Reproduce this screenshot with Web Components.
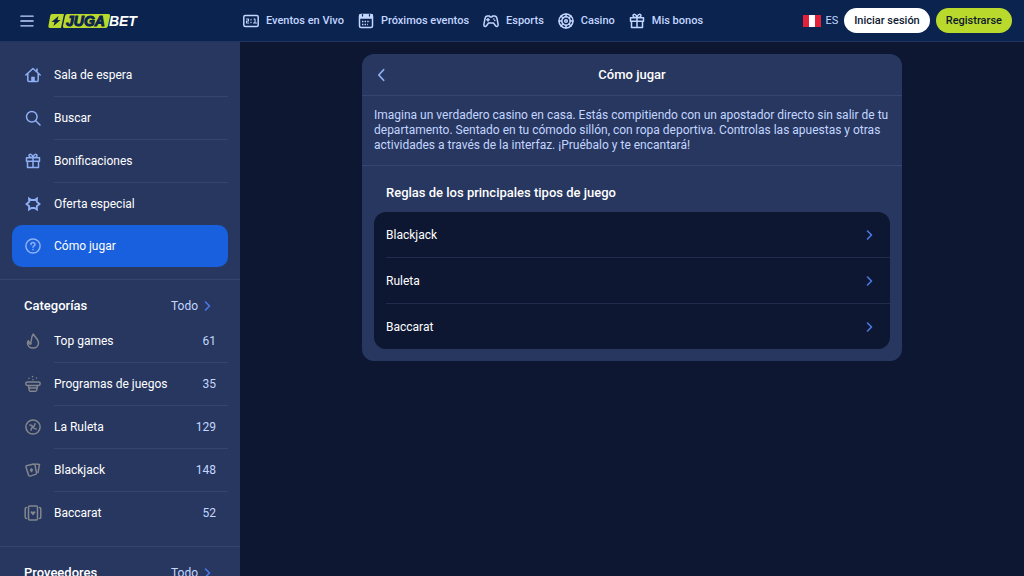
<!DOCTYPE html>
<html lang="es">
<head>
<meta charset="utf-8">
<meta name="viewport" content="width=device-width, initial-scale=1">
<title>Cómo jugar</title>
<style>
  :root {
    --bg: #0d1731;
    --surface: #27375f;
    --line: #344570;
    --header: #0b234f;
    --accent: #1860dd;
    --lime: #b9da2c;
    --soft: #c3d6ff;
    --icon: #8fb0f5;
    --sidebar: 240px;
  }
  body { margin: 0; background: var(--bg); color: #fff; font: 12px/16px Roboto, "Liberation Sans", sans-serif; }
</style>
</head>
<body>
<jb-app>
  <jb-header slot="header">
    <jb-nav-link icon="score">Eventos en Vivo</jb-nav-link>
    <jb-nav-link icon="calendar">Próximos eventos</jb-nav-link>
    <jb-nav-link icon="gamepad">Esports</jb-nav-link>
    <jb-nav-link icon="chip">Casino</jb-nav-link>
    <jb-nav-link icon="gift">Mis bonos</jb-nav-link>
  </jb-header>
  <jb-sidebar slot="sidebar">
    <jb-group>
      <jb-side-item icon="home">Sala de espera</jb-side-item>
      <jb-side-item icon="search">Buscar</jb-side-item>
      <jb-side-item icon="gift">Bonificaciones</jb-side-item>
      <jb-side-item icon="star" last>Oferta especial</jb-side-item>
      <jb-side-item icon="help" last active>Cómo jugar</jb-side-item>
    </jb-group>
    <jb-group heading="Categorías">
      <jb-side-item icon="fire" muted count="61">Top games</jb-side-item>
      <jb-side-item icon="hat" muted count="35">Programas de juegos</jb-side-item>
      <jb-side-item icon="wheel" muted count="129">La Ruleta</jb-side-item>
      <jb-side-item icon="cards" muted count="148">Blackjack</jb-side-item>
      <jb-side-item icon="baccarat" muted count="52" last>Baccarat</jb-side-item>
    </jb-group>
    <jb-group heading="Proveedores"></jb-group>
  </jb-sidebar>
  <jb-panel heading="Cómo jugar">
    <span slot="intro">Imagina un verdadero casino en casa. Estás compitiendo con un apostador directo sin salir de tu departamento. Sentado en tu cómodo sillón, con ropa deportiva. Controlas las apuestas y otras actividades a través de la interfaz. ¡Pruébalo y te encantará!</span>
    <span slot="subtitle">Reglas de los principales tipos de juego</span>
    <jb-rule-row>Blackjack</jb-rule-row>
    <jb-rule-row>Ruleta</jb-rule-row>
    <jb-rule-row last>Baccarat</jb-rule-row>
  </jb-panel>
</jb-app>

<script>
const ICONS = {
  menu: '<path d="M1 2.500h14M1 8h14M1 13.500h14"/>',
  score: '<rect x=".8" y="2.5" width="14.4" height="11" rx="1.5"/><path d="M3.5 6h2v2h-2v2h2.2M11 6h1v4M10.5 10h3M8 6.2v.8M8 9v.8" stroke-width="1.1"/>',
  calendar: '<rect x="1.5" y="1.5" width="13" height="13" rx="1.500"/><path d="M2 2h12v3H2z" fill="currentColor"/><path d="M4.500 1.500v1.500M11.500 1.500v1.500" stroke="#0b234f" stroke-width="1.200"/><path d="M4 8.500h8M4 11.500h6" stroke-dasharray="1.4 1.2" stroke-linecap="butt"/>',
  gamepad: '<path d="M4.500 3h2l.7 1h1.600l.7-1h2c1.500 0 2.200 1 2.600 2.800l1 5.700c.3 1.900-1.500 2.600-2.600 1.300L10.500 10h-5l-2 2.800C2.400 14.100.6 13.400.9 11.500l1-5.700C2.300 4 3 3 4.500 3z"/><path d="M5 5.500v2.400M3.800 6.700h2.400M10.800 6h.1M11.800 7.500h.1"/>',
  chip: '<circle cx="8" cy="8" r="7"/><circle cx="8" cy="8" r="4.200"/><circle cx="8" cy="8" r="1.300"/><path d="M8 1v2.800M8 12.200V15M1 8h2.800M12.200 8H15M3 3l2 2M11 11l2 2M13 3l-2 2M5 11l-2 2"/>',
  gift: '<path d="M1.500 4.800h13v3.400h-13zM2.500 8.200h11v6.300h-11zM8 4.800v9.700M8 4.800C5 4.800 4 3.700 4 2.600 4 .8 7.300.4 8 4.800zM8 4.800c3 0 4-1.100 4-2.200C12 .8 8.700.4 8 4.800z"/>',
  home: '<path d="M.8 8 8 1.500 15.200 8M12 4.500V2M2.800 6.500v6.700c0 .8.400 1.300 1.300 1.300h7.800c.9 0 1.300-.5 1.300-1.300V6.500"/><path d="M6.500 14.500V10h3v4.500" fill="currentColor" stroke-width=".6"/>',
  search: '<circle cx="6.800" cy="6.800" r="5.300"/><path d="m10.700 10.700 4.300 4.300"/>',
  star: '<path d="M4 2.500 6.500 4h3L12 2.500l-.2 3.300L14.500 8l-2.700 2.200.2 3.300L9.500 12h-3L4 13.500l.2-3.300L1.500 8l2.700-2.200z" stroke-width="1.800" stroke-linejoin="miter"/>',
  help: '<circle cx="8" cy="8" r="7.100"/><path d="M6 6.500C6 4 10 4 10 6.400 10 8 8 7.800 8 9.200M8 11.400v.3"/>',
  fire: '<path d="M8.300 1C9 3.500 13.500 6 13.500 10c0 3-2.300 5-5.500 5s-5.500-2-5.500-4.700c0-1 .3-1.900.8-2.600.3 1.300 1 2 1.900 2C7.400 9.700 5 5 8.300 1z"/><path d="M3 9.500c.6 1.500 2 2 3.200 1.200"/>',
  hat: '<rect x=".8" y="6" width="14.400" height="3.400" rx="1.700"/><path d="M3.500 9.500 4.200 14q.2 1.200 1.300 1.200h5q1.100 0 1.300-1.200l.7-4.500M4 12h8M7.500 .6v.1M4 2.200v.1M11.500 2v.1M8 3.700v.1"/>',
  wheel: '<circle cx="8" cy="8" r="7.100"/><path d="M4.800 6C6.500 6 7.500 7 8 8c.5 1 1.500 2 3.200 2M10 4.800C10 6.500 9 7.500 8 8c-1 .5-2 1.500-2 3.200"/>',
  cards: '<path d="m1.500 3.700 7.200-1.700q1-.1 1.300.9l1.500 8.200q.1 1-.9 1.300l-5.600 1.700q-1 .1-1.400-.9L1 5q-.2-1 .5-1.300zM11 2l3.500.5L13 10.500"/><path d="m6.200 5.700 2.100 2.100-1.500 2.700-2.200-2z" fill="currentColor" stroke="none"/>',
  baccarat: '<rect x="3.500" y="1" width="9" height="14" rx="1.200"/><path d="M1.500 2.500C.5 2.500.2 3 .2 4v8c0 1 .3 1.500 1.300 1.500M14.500 2.500c1 0 1.300.5 1.300 1.500v8c0 1-.3 1.500-1.300 1.500"/><path d="M8 10.500 5.500 7.500c0-1.700 2-1.700 2.500-.5.500-1.200 2.500-1.200 2.500.5z" fill="currentColor" stroke="none"/>',
  right: '<path d="m5.500 4 4 4-4 4" stroke-width="1.600"/>',
  left: '<path d="M11 2 5.500 8l5.500 6" stroke-width="2"/>'
};

function define(name, render) {
  customElements.define(name, class extends HTMLElement {
    constructor() {
      super();
      this.attachShadow({ mode: 'open' });
    }
    connectedCallback() {
      this.shadowRoot.innerHTML = render(this);
    }
  });
}

define('jb-icon', el => `
  <style>
    :host { display: block; flex: none; width: 16px; height: 16px; }
    svg { display: block; width: 100%; height: 100%; overflow: visible; fill: none; stroke: currentColor;
      stroke-width: 1.5; stroke-linecap: round; stroke-linejoin: round; }
  </style>
  <svg viewBox="0 0 16 16" aria-hidden="true">${ICONS[el.getAttribute('name')]}</svg>`);

define('jb-logo', () => `
  <style>
    :host { display: block; flex: none; }
    a { display: flex; align-items: center; height: 14px; text-decoration: none;
      font: italic 700 14px/14px "Liberation Sans", Arial, sans-serif; color: var(--header); }
    svg { display: block; width: 16px; height: 14px; }
    .juga { position: relative; z-index: 0; padding: 0 4px 0 2px; -webkit-text-stroke: 1px var(--header); }
    .juga::before { content: ""; position: absolute; z-index: -1; inset: 0; background: var(--lime); border-radius: 2px; transform: skewX(-12deg); }
    .bet { color: #fff; }
  </style>
  <a href="#" aria-label="Jugabet">
    <svg viewBox="0 0 16 14"><path d="M4 0h12l-3 14H2Q0 14 .4 12L2.200 2Q2.500 0 4 0z" fill="#b9da2c"/><path d="M10.500 2 3.500 8h3L5.500 12l7-6h-3z" fill="#0b234f"/></svg>
    <span class="juga">JUGA</span><span class="bet">BET</span>
  </a>`);

define('jb-header', () => `
  <style>
    :host { display: flex; align-items: center; gap: 3px; box-sizing: border-box; height: 42px; padding-right: 12px;
      background: var(--header); border-bottom: 1px solid #203660; }
    button { font: 500 11px/16px Roboto, "Liberation Sans", sans-serif; border: 0; cursor: pointer; }
    .menu { padding: 0; background: none; color: var(--soft); }
    .menu jb-icon { width: 14px; height: 14px; }
    .start, .end { display: flex; align-items: center; }
    .start { gap: 14px; flex: none; box-sizing: border-box; width: var(--sidebar); padding-left: 20px; }
    .end { flex: 1; justify-content: flex-end; gap: 6px; }
    nav { display: flex; gap: 14px; }
    .lang { display: flex; align-items: center; gap: 4px; padding: 0; background: none; color: var(--soft); font-weight: 400; }
    .flag { width: 18px; height: 12px; background: linear-gradient(90deg, #e3213a 33%, #fff 33% 67%, #e3213a 67%); }
    .pill { height: 25px; padding: 0 10px; border-radius: 13px; background: #fff; color: #0d1731; }
    .lime { background: var(--lime); }
  </style>
  <div class="start">
    <button class="menu" aria-label="Menú"><jb-icon name="menu"></jb-icon></button>
    <jb-logo></jb-logo>
  </div>
  <nav><slot></slot></nav>
  <div class="end">
    <button class="lang"><span class="flag"></span>ES</button>
    <button class="pill">Iniciar sesión</button>
    <button class="pill lime">Registrarse</button>
  </div>`);

define('jb-nav-link', el => `
  <style>
    :host { display: block; }
    a { display: flex; align-items: center; gap: 7px; color: var(--soft); text-decoration: none; white-space: nowrap;
      font-size: 11px; font-weight: 500; }
  </style>
  <a href="#"><jb-icon name="${el.getAttribute('icon')}"></jb-icon><span><slot></slot></span></a>`);

define('jb-app', () => `
  <style>
    :host { display: flex; flex-direction: column; height: 100vh; }
    .body { display: flex; flex: 1; min-height: 0; }
    main { flex: 1; min-width: 0; overflow-y: auto; padding: 12px; }
  </style>
  <slot name="header"></slot>
  <div class="body">
    <slot name="sidebar"></slot>
    <main><slot></slot></main>
  </div>`);

define('jb-sidebar', () => `
  <style>
    :host { display: block; flex: none; box-sizing: border-box; width: var(--sidebar); overflow-y: auto; scrollbar-width: none; background: var(--surface); }
  </style>
  <slot></slot>`);

define('jb-group', el => {
  const heading = el.getAttribute('heading');
  return `
  <style>
    :host { display: block; padding: 12px; border-bottom: 1px solid var(--line); }
    :host(:last-child) { border-bottom: 0; }
    .head { display: flex; align-items: center; justify-content: space-between; height: 28px; padding: 0 12px; }
    h2 { margin: 0; font-size: 13px; font-weight: 500; }
    a { display: flex; align-items: center; gap: 2px; color: var(--soft); text-decoration: none; }
    jb-icon { color: #4c78e8; }
  </style>
  ${heading ? `<div class="head"><h2>${heading}</h2><a href="#">Todo<jb-icon name="right"></jb-icon></a></div>` : ''}
  <slot></slot>`;
});

define('jb-side-item', el => `
  <style>
    :host { display: block; }
    a { display: flex; align-items: center; gap: 13px; height: 42px; padding: 0 12px 0 13px; border-radius: 10px;
      color: #fff; text-decoration: none; }
    jb-icon { color: var(--icon); }
    .label { flex: 1; }
    .count { color: var(--soft); }
    :host([muted]) jb-icon { color: #83868d; }
    :host([active]) a { background: var(--accent); }
    :host(:not([last]))::after { content: ""; display: block; height: 1px; margin-left: 42px; background: var(--line); }
  </style>
  <a href="#" ${el.hasAttribute('active') ? 'aria-current="page"' : ''}>
    <jb-icon name="${el.getAttribute('icon')}"></jb-icon>
    <span class="label"><slot></slot></span>
    ${el.hasAttribute('count') ? `<span class="count">${el.getAttribute('count')}</span>` : ''}
  </a>`);

define('jb-panel', el => `
  <style>
    :host { display: block; box-sizing: border-box; max-width: 540px; margin: 0 auto; padding-bottom: 12px; border-radius: 12px; background: var(--surface); }
    header { display: grid; grid-template-columns: 16px 1fr 16px; align-items: center; height: 41px; padding: 0 12px; border-bottom: 1px solid var(--line); }
    button { padding: 0; border: 0; background: none; color: var(--icon); cursor: pointer; }
    jb-icon { width: 14px; height: 14px; }
    h1 { margin: 0; font-size: 13px; font-weight: 500; text-align: center; }
    p { margin: 0; padding: 12px; line-height: 15px; color: var(--soft); border-bottom: 1px solid var(--line); }
    h2 { margin: 0; padding: 19px 24px 11px; font-size: 13px; font-weight: 500; }
    .list { margin: 0 12px; border-radius: 12px; background: var(--bg); }
  </style>
  <header><button aria-label="Volver"><jb-icon name="left"></jb-icon></button><h1>${el.getAttribute('heading')}</h1></header>
  <p><slot name="intro"></slot></p>
  <h2><slot name="subtitle"></slot></h2>
  <div class="list"><slot></slot></div>`);

define('jb-rule-row', () => `
  <style>
    :host { display: block; padding-left: 12px; }
    a { display: flex; align-items: center; justify-content: space-between; height: 45px; padding-right: 12px; color: #fff; text-decoration: none; border-bottom: 1px solid #202c4b; }
    :host([last]) a { border-bottom: 0; }
    jb-icon { color: #4c78e8; }
  </style>
  <a href="#"><span><slot></slot></span><jb-icon name="right"></jb-icon></a>`);
</script>
</body>
</html>
